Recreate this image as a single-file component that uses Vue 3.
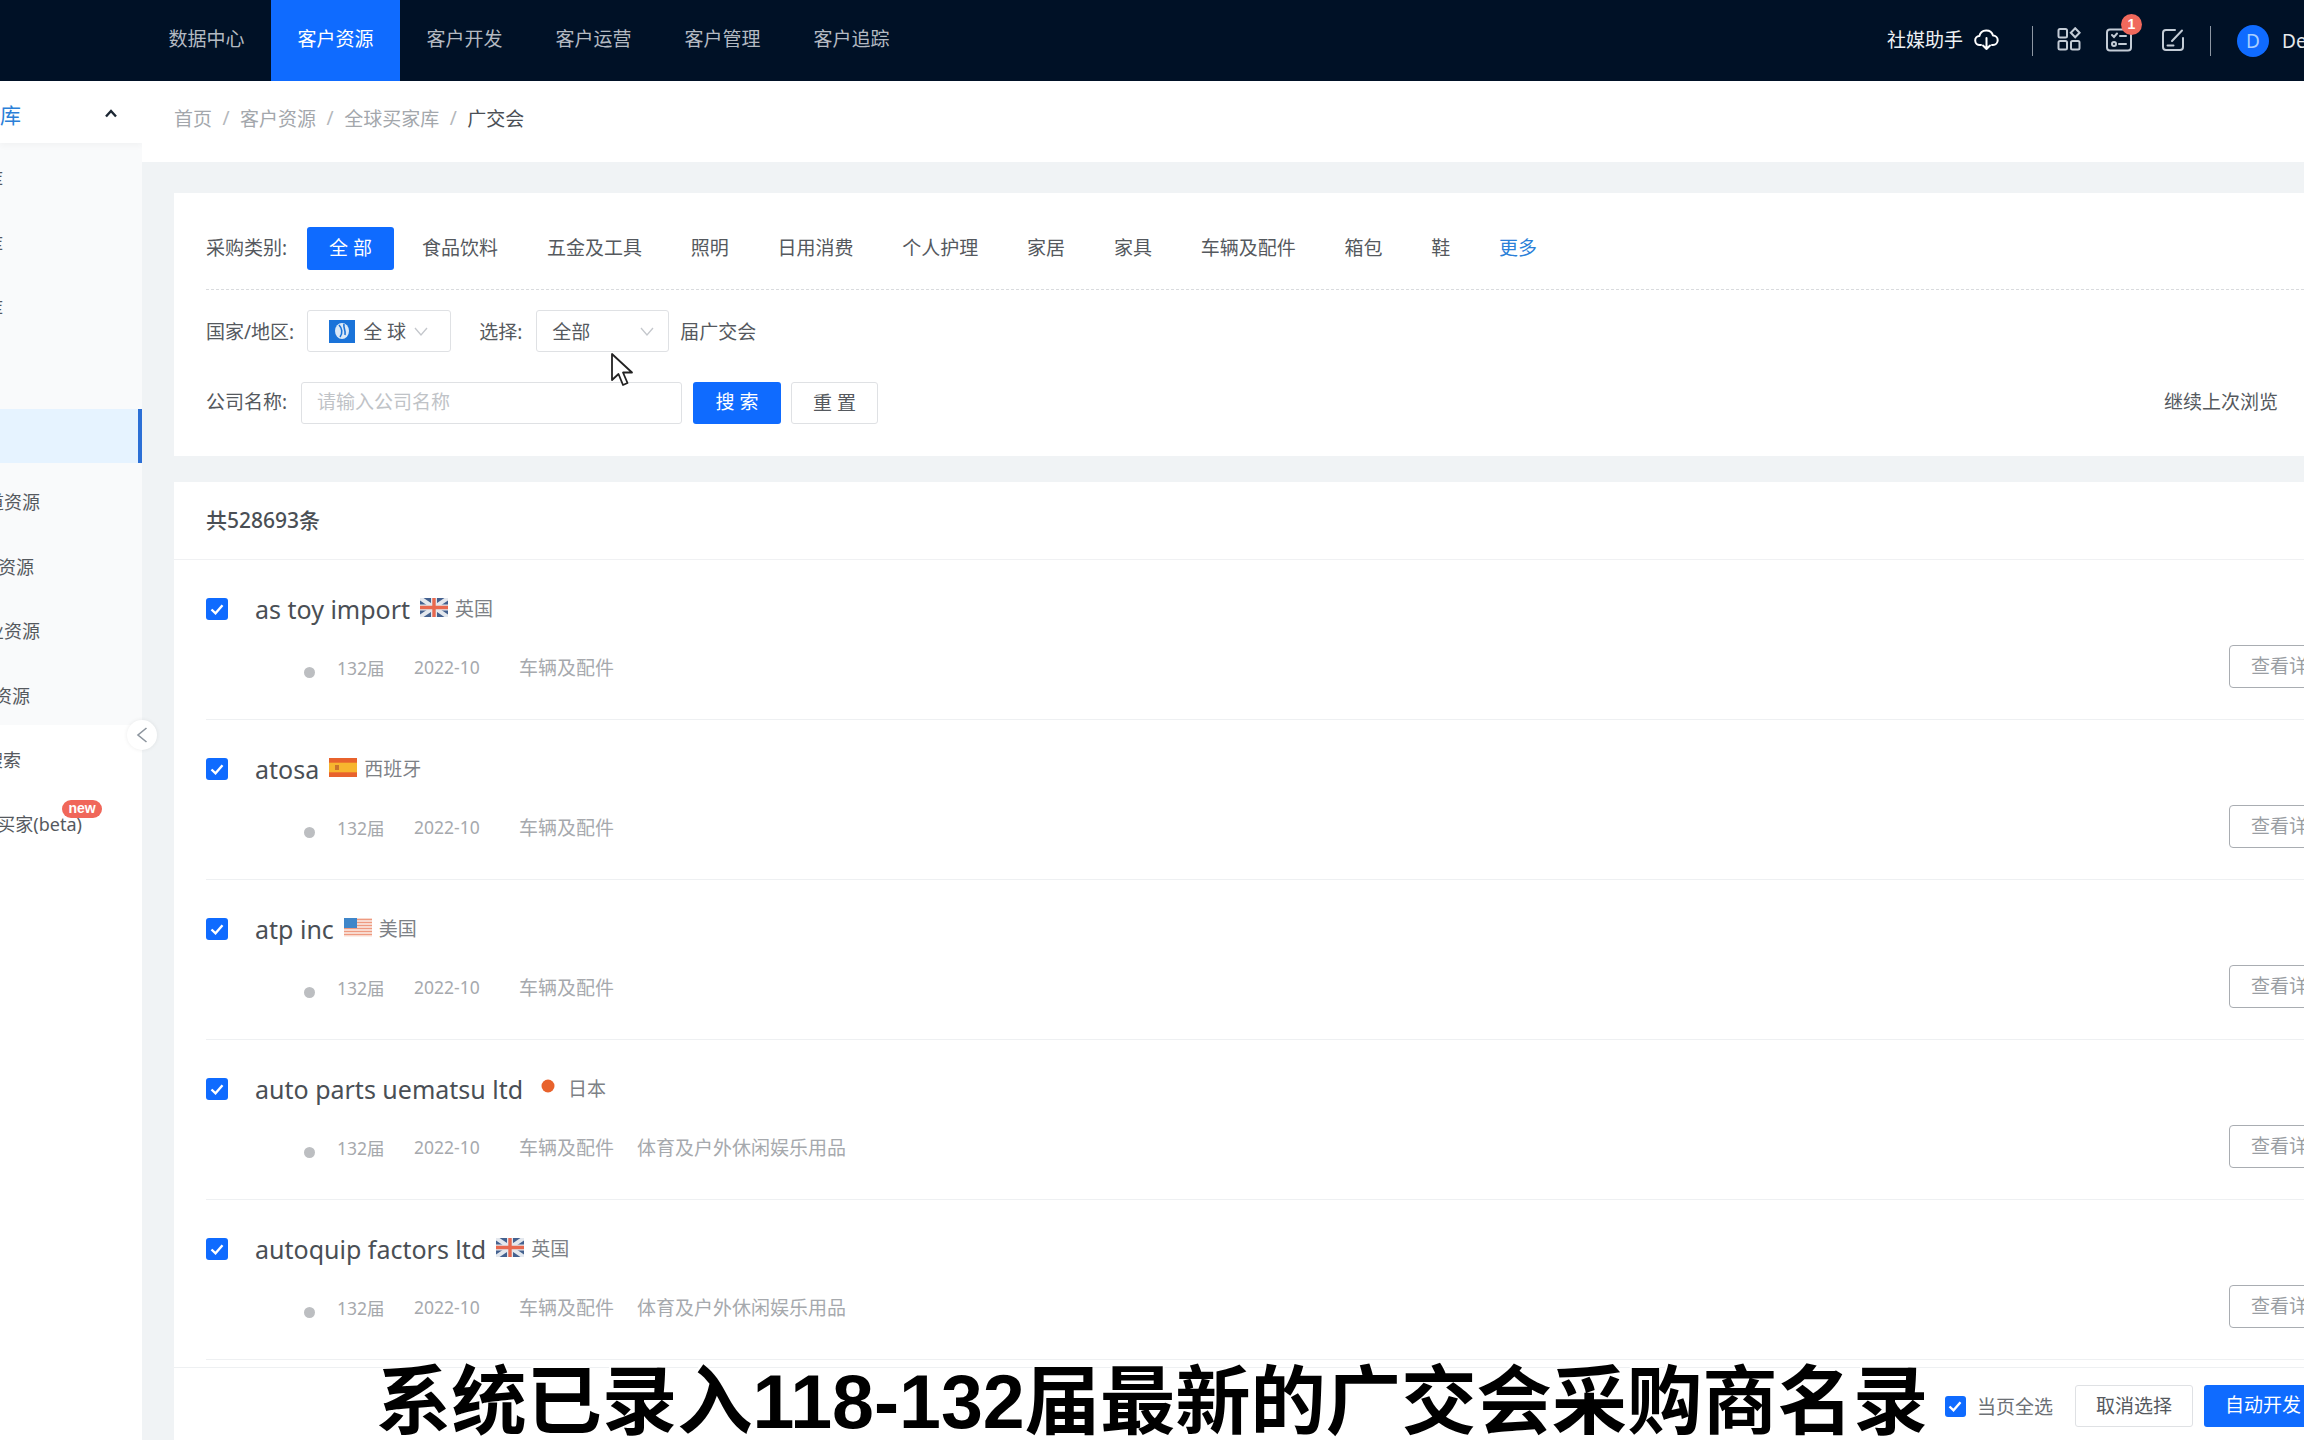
<script setup>
const navs = ['数据中心', '客户资源', '客户开发', '客户运营', '客户管理', '客户追踪']
const crumbs = ['首页', '客户资源', '全球买家库']
const cats = ['食品饮料', '五金及工具', '照明', '日用消费', '个人护理', '家居', '家具', '车辆及配件', '箱包', '鞋']

// end = where the text stops on screen, the rest runs off the left edge
const subItems = [
  { text: '展会库', end: 3 },
  { text: '海关库', end: 3 },
  { text: '名录库', end: 3 },
  { text: '', end: 3 },
  { text: '', end: 3, active: true },
  { text: '渠道资源', end: 40 },
  { text: '行业资源', end: 34 },
  { text: '企业资源', end: 40 },
  { text: '社媒资源', end: 30 }
]

const rows = [
  { name: 'as toy import', flag: 'uk', country: '英国', tags: ['车辆及配件'] },
  { name: 'atosa', flag: 'es', country: '西班牙', tags: ['车辆及配件'] },
  { name: 'atp inc', flag: 'us', country: '美国', tags: ['车辆及配件'] },
  { name: 'auto parts uematsu ltd', flag: 'jp', country: '日本', tags: ['车辆及配件', '体育及户外休闲娱乐用品'] },
  { name: 'autoquip factors ltd', flag: 'uk', country: '英国', tags: ['车辆及配件', '体育及户外休闲娱乐用品'] }
]
</script>

<template>
  <div class="page">
    <header class="topbar">
      <nav class="nav">
        <a v-for="(n, i) in navs" :key="n" class="nav-item" :class="{ on: i === 1 }">{{ n }}</a>
      </nav>
      <div class="tools">
        <span class="helper">社媒助手</span>
        <svg class="cloud" width="25" height="22" viewBox="0 0 25 22" fill="none" stroke="#fff" stroke-width="2" stroke-linecap="round" stroke-linejoin="round">
          <path d="M7 16H6a4.500 4.500 0 0 1-.6-9A7 7 0 0 1 19 6.600 4.700 4.700 0 0 1 19 16h-1" />
          <path d="M12.500 9v11M9 16.500l3.500 3.500 3.500-3.500" />
        </svg>
        <i class="sep"></i>
        <svg class="ic-grid" width="24" height="24" viewBox="0 0 24 24" fill="none" stroke="#c3ccd6" stroke-width="2">
          <rect x="1.500" y="2" width="8.500" height="8.500" rx="1.500" />
          <rect x="1.500" y="14" width="8.500" height="8.500" rx="1.500" />
          <rect x="14" y="14" width="8.500" height="8.500" rx="1.500" />
          <path d="M18.200 1.200l4.400 4.500-4.400 4.500-4.400-4.500z" />
        </svg>
        <div class="task">
          <svg width="26" height="24" viewBox="0 0 26 24" fill="none" stroke="#c3ccd6" stroke-width="2" stroke-linecap="round">
            <rect x="1" y="1.500" width="24" height="21" rx="3" />
            <path d="M6 7l2 2 3-3.500M14 8h6M13 16h7" />
            <circle cx="8" cy="16" r="2" />
          </svg>
          <b class="badge">1</b>
        </div>
        <svg class="ic-edit" width="24" height="24" viewBox="0 0 24 24" fill="none" stroke="#c3ccd6" stroke-width="2" stroke-linecap="round">
          <path d="M14 2H5a3 3 0 0 0-3 3v14a3 3 0 0 0 3 3h14a3 3 0 0 0 3-3v-9" />
          <path d="M11 13L21 2.500M6.500 17.500h6" />
        </svg>
        <i class="sep sep2"></i>
        <span class="avatar">D</span>
        <span class="user">Demo</span>
      </div>
    </header>

    <div class="body">
      <aside class="side">
        <div class="side-head">
          <span class="side-text head-text" style="width: 21px">全球买家库</span>
          <svg class="up" width="12" height="9" viewBox="0 0 12 9" fill="none" stroke="#1c2733" stroke-width="2.400"><path d="M1 7.500L6 2l5 5.500" /></svg>
        </div>
        <div class="sub">
          <div v-for="(s, i) in subItems" :key="i" class="side-item" :class="{ active: s.active }">
            <span class="side-text" :style="{ width: s.end + 'px' }">{{ s.text }}</span>
          </div>
        </div>
        <div class="side-item after"><span class="side-text" style="width: 21px">智能搜索</span></div>
        <div class="side-item">
          <span class="side-text" style="width: 82px">全球买家(beta)</span>
          <em class="new">new</em>
        </div>
      </aside>
      <button class="collapse">
        <svg width="12" height="18" viewBox="0 0 12 18" fill="none" stroke="#8d959e" stroke-width="1.600"><path d="M10.500 2L2 9l8.500 7" /></svg>
      </button>

      <main class="main">
        <div class="crumbs">
          <template v-for="c in crumbs" :key="c"><span>{{ c }}</span><i>/</i></template>
          <span class="cur">广交会</span>
        </div>

        <section class="filter card">
          <div class="cat-row">
            <span class="label">采购类别:</span>
            <span class="cat-all">全 部</span>
            <span v-for="c in cats" :key="c" class="cat">{{ c }}</span>
            <span class="cat more">更多</span>
          </div>
          <div class="line2">
            <span class="label">国家/地区:</span>
            <div class="select sel-country">
              <svg width="26" height="23" viewBox="0 0 26 23"><rect width="26" height="23" fill="#1a73d9" /><ellipse cx="13" cy="11" rx="7" ry="8" fill="#dbe9f7" /><path d="M10 5c3 3 4 8 1 12M15 4c-1 4 2 6 1 11" stroke="#1a73d9" stroke-width="1.600" fill="none" /></svg>
              <span class="sel-txt">全 球</span>
              <svg class="chev" width="14" height="9" viewBox="0 0 14 9" fill="none" stroke="#c4c7cc" stroke-width="1.300"><path d="M1 1l6 7 6-7" /></svg>
            </div>
            <span class="label pick">选择:</span>
            <div class="select sel-pick">
              <span>全部</span>
              <svg class="chev" width="14" height="9" viewBox="0 0 14 9" fill="none" stroke="#c4c7cc" stroke-width="1.300"><path d="M1 1l6 7 6-7" /></svg>
            </div>
            <span class="label suffix">届广交会</span>
          </div>
          <div class="line3">
            <span class="label">公司名称:</span>
            <div class="input">请输入公司名称</div>
            <span class="btn primary">搜 索</span>
            <span class="btn plain">重 置</span>
            <span class="resume">继续上次浏览</span>
          </div>
        </section>

        <section class="list card">
          <div class="total">共528693条</div>
          <div v-for="r in rows" :key="r.name" class="row">
            <div class="row-main">
              <div class="row-title">
                <span class="check">
                  <svg width="14" height="11" viewBox="0 0 14 11" fill="none" stroke="#fff" stroke-width="2.400"><path d="M1.500 5.500l4 3.800 7-8" /></svg>
                </span>
                <span class="name">{{ r.name }}</span>
                <svg v-if="r.flag === 'uk'" class="flag" viewBox="0 0 28 19">
                  <rect width="28" height="19" fill="#44618f" />
                  <path d="M0 0l28 19M28 0L0 19" stroke="#e4e8ee" stroke-width="4" />
                  <path d="M14 0v19M0 9.500h28" stroke="#e4e8ee" stroke-width="6" />
                  <path d="M14 0v19M0 9.500h28" stroke="#e8694f" stroke-width="3.400" />
                </svg>
                <svg v-else-if="r.flag === 'es'" class="flag" viewBox="0 0 28 19">
                  <rect width="28" height="19" fill="#e8622c" />
                  <rect y="4.700" width="28" height="9.600" fill="#f7b52e" />
                  <rect x="6" y="7" width="4" height="5" fill="#c9732c" />
                </svg>
                <svg v-else-if="r.flag === 'us'" class="flag" viewBox="0 0 28 19">
                  <rect width="28" height="19" fill="#fbeee8" />
                  <path d="M0 1.500h28M0 4.500h28M0 7.500h28M0 10.500h28M0 13.500h28M0 16.500h28" stroke="#ee9a80" stroke-width="1.500" />
                  <rect width="13" height="10" fill="#3f86c9" />
                </svg>
                <svg v-else class="flag" viewBox="0 0 28 19">
                  <circle cx="15" cy="8" r="6.500" fill="#e8622c" />
                </svg>
                <span class="country">{{ r.country }}</span>
              </div>
              <div class="row-meta">
                <i class="dot"></i>
                <span class="m1">132届</span>
                <span class="m2">2022-10</span>
                <span v-for="t in r.tags" :key="t" class="m3">{{ t }}</span>
              </div>
            </div>
            <span class="detail">查看详情</span>
          </div>
          <div class="foot">
            <span class="check small">
              <svg width="14" height="11" viewBox="0 0 14 11" fill="none" stroke="#fff" stroke-width="2.400"><path d="M1.500 5.500l4 3.800 7-8" /></svg>
            </span>
            <span class="all">当页全选</span>
            <span class="btn cancel">取消选择</span>
            <span class="btn primary auto">自动开发</span>
          </div>
        </section>
      </main>
    </div>

    <svg class="cursor" width="24" height="36" viewBox="0 0 24 36">
      <path d="M2 2v26l6.500-6 4.500 11 4.500-2-4.500-10.500H22z" fill="#fff" stroke="#222" stroke-width="1.800" stroke-linejoin="round" />
    </svg>
    <div class="subtitle">系统已录入118-132届最新的广交会采购商名录</div>
  </div>
</template>

<style>
html, body { margin: 0; background: #fff; }
</style>

<style scoped>
.page {
  position: relative;
  width: 2304px;
  height: 1440px;
  overflow: hidden;
  background: #f0f3f5;
  font-family: "Noto Sans", "Noto Sans CJK SC", sans-serif;
  font-size: 19px;
  color: #4a4f55;
}
.topbar {
  height: 81px;
  background: #001126;
  display: flex;
  align-items: stretch;
  padding-left: 142px;
}
.nav { display: flex; flex: none; }
.nav-item {
  width: 129px;
  text-align: center;
  line-height: 79px;
  color: #b4bac2;
  font-size: 19px;
}
.nav-item.on { background: #0f6bff; color: #fff; }
.tools {
  margin-left: 971px;
  display: flex;
  align-items: center;
  color: #fff;
  flex: none;
  white-space: nowrap;
}
.tools > * { flex: none; }
.helper { font-size: 19px; color: #eef1f4; margin-top: -4px; }
.cloud { margin-left: 11px; margin-top: -1px; }
.sep { width: 1px; height: 30px; background: #8d97a3; margin-left: 33px; }
.ic-grid { margin-left: 24px; margin-top: -3px; }
.task { position: relative; margin-left: 25px; height: 24px; margin-top: -2px; }
.badge {
  position: absolute;
  left: 15px;
  top: -14px;
  width: 21px;
  height: 21px;
  border-radius: 50%;
  background: #f0695c;
  color: #fff;
  font: 700 14px/21px "Liberation Sans", sans-serif;
  text-align: center;
}
.ic-edit { margin-left: 29px; margin-top: -2px; }
.sep2 { margin-left: 25px; }
.avatar {
  width: 32px;
  height: 32px;
  border-radius: 50%;
  background: #0f6bff;
  color: #a9cfff;
  text-align: center;
  line-height: 32px;
  margin-left: 26px;
  font-size: 19px;
}
.user { margin-left: 13px; color: #e6e9ec; font-size: 19px; }

.body { display: flex; height: 1359px; position: relative; }
.side {
  width: 142px;
  flex: none;
  background: #fff;
  overflow: hidden;
  font-size: 18px;
}
.side-head {
  height: 62px;
  display: flex;
  align-items: center;
  position: relative;
  box-shadow: 0 3px 6px rgba(0, 0, 0, 0.03);
  padding-top: 4px;
  box-sizing: border-box;
}
.up { position: absolute; left: 105px; top: 28px; }
.sub {
  background: #f9fafb;
  padding: 8px 0 3px;
  display: flex;
  flex-direction: column;
  gap: 10.600px;
}
.side-item {
  height: 54px;
  display: flex;
  align-items: center;
  position: relative;
}
.side-item.active {
  background: #e6f3ff;
  border-right: 4px solid #2b6fd6;
}
.side-item.after { margin-top: 7px; margin-bottom: 10.600px; }
.side-text {
  display: flex;
  justify-content: flex-end;
  white-space: nowrap;
  color: #55595e;
  flex: none;
}
.head-text { color: #2b7fd8; font-size: 21px; }
.new {
  position: absolute;
  left: 62px;
  top: 4px;
  width: 40px;
  height: 18px;
  border-radius: 9px;
  background: #f0675a;
  color: #fff;
  font: 700 14px/17px "Liberation Sans", sans-serif;
  text-align: center;
}
.collapse {
  position: absolute;
  left: 127px;
  top: 639px;
  width: 30px;
  height: 30px;
  padding: 0;
  border: 0;
  border-radius: 50%;
  background: #fff;
  box-shadow: 0 0 4px rgba(0, 0, 0, 0.08);
  display: flex;
  align-items: center;
  justify-content: center;
}

.main { flex: 1; min-width: 0; }
.crumbs {
  height: 81px;
  background: #fff;
  display: flex;
  align-items: center;
  padding-left: 32px;
  padding-bottom: 7px;
  box-sizing: border-box;
  color: #a3a7ac;
  gap: 10.500px;
}
.crumbs i { font-style: normal; color: #b4b7bb; }
.crumbs .cur { color: #4a4f55; }
.card { background: #fff; margin-left: 32px; }
.filter { margin-top: 31px; height: 263px; padding-left: 32px; box-sizing: border-box; }
.label { color: #55595e; white-space: nowrap; }
.cat-row {
  height: 97px;
  display: flex;
  align-items: center;
  border-bottom: 1px dashed #d9dbde;
  padding-top: 15px;
  box-sizing: border-box;
}
.cat-row .label, .cat { padding-bottom: 4px; }
.cat-all {
  width: 87px;
  height: 43px;
  margin-left: 20px;
  line-height: 42px;
  text-align: center;
  background: #0f6bff;
  color: #fff;
  border-radius: 3px;
}
.cat { padding-left: 24.400px; padding-right: 24.400px; color: #55595e; white-space: nowrap; }
.cat-all + .cat { padding-left: 28px; }
.cat.more { color: #2b7fd8; }
.line2 { height: 42px; margin-top: 20px; display: flex; align-items: center; }
.select {
  height: 42px;
  box-sizing: border-box;
  border: 1px solid #dfe1e4;
  border-radius: 3px;
  display: flex;
  align-items: center;
  position: relative;
  color: #55595e;
}
.sel-country { width: 144px; margin-left: 13px; padding-left: 21px; }
.sel-txt { margin-left: 8px; }
.sel-country .chev { margin-left: 8px; }
.sel-pick { width: 133px; margin-left: 14px; padding-left: 15px; }
.sel-pick .chev { position: absolute; right: 14px; top: 16px; }
.pick { margin-left: 28px; }
.suffix { margin-left: 11px; }
.line3 { height: 43px; margin-top: 29px; display: flex; align-items: center; position: relative; }
.line3 .label, .resume { padding-bottom: 3px; }
.input {
  width: 381px;
  height: 42px;
  box-sizing: border-box;
  margin-left: 14px;
  border: 1px solid #dfe1e4;
  border-radius: 3px;
  padding-left: 15px;
  line-height: 38px;
  color: #c0c3c7;
}
.btn {
  height: 42px;
  line-height: 40px;
  box-sizing: border-box;
  text-align: center;
  border-radius: 3px;
  white-space: nowrap;
}
.primary { width: 88px; margin-left: 11px; background: #0f6bff; color: #fff; }
.plain { width: 87px; margin-left: 10px; border: 1px solid #dfe1e4; color: #55595e; }
.resume { margin-left: auto; margin-right: 26px; color: #55595e; }

.list { margin-top: 26px; height: 958px; position: relative; padding: 0 0 0 32px; }
.total {
  height: 77px;
  line-height: 76px;
  font-size: 21px;
  font-weight: 500;
  margin-left: -32px;
  padding-left: 32px;
  border-bottom: 1px solid #f0f1f3;
  color: #4a4f55;
}
.row {
  height: 159px;
  box-sizing: content-box;
  border-bottom: 1px solid #eef0f2;
  display: flex;
  align-items: flex-start;
  position: relative;
}
.row-main { flex: 1; }
.row-title { display: flex; align-items: center; height: 40px; margin-top: 29px; }
.check {
  width: 22px;
  height: 22px;
  flex: none;
  border-radius: 3px;
  background: #0f6bff;
  display: flex;
  align-items: center;
  justify-content: center;
}
.name { margin-left: 27px; font-size: 25px; color: #4a4f55; white-space: nowrap; }
.flag { width: 28px; height: 19px; margin-left: 10px; flex: none; margin-top: -4px; }
.country { margin-left: 7px; color: #7d8186; margin-top: -3px; }
.row-meta { display: flex; align-items: center; height: 30px; margin-left: 98px; margin-top: 23px; color: #a6a9ad; white-space: nowrap; }
.dot { width: 11px; height: 11px; border-radius: 50%; background: #bcbec1; margin-top: 10px; }
.m1 { margin-left: 22px; width: 77px; font-size: 17.500px; }
.m2 { width: 105px; font-size: 17.500px; }
.m3 { margin-right: 23px; }
.detail {
  position: absolute;
  left: 2023px;
  top: 85px;
  width: 120px;
  height: 43px;
  box-sizing: border-box;
  border: 1px solid #a9adb2;
  border-radius: 4px;
  line-height: 40px;
  padding-left: 21px;
  color: #9a9ea3;
  white-space: nowrap;
}
.foot {
  position: absolute;
  left: 0;
  right: -60px;
  top: 885px;
  height: 73px;
  background: #fff;
  border-top: 1px solid #eef0f2;
  display: flex;
  align-items: center;
  justify-content: flex-end;
  padding-top: 4px;
  box-sizing: border-box;
}
.check.small { width: 21px; height: 21px; }
.all { margin-left: 11px; color: #6c7075; }
.cancel { width: 118px; margin-left: 22px; border: 1px solid #dfe1e4; color: #55595e; }
.auto { width: 160px; margin-left: 11px; text-align: left; padding-left: 21px; }

.cursor { position: absolute; left: 610px; top: 352px; }
.subtitle {
  position: absolute;
  left: 376px;
  top: 1356px;
  font-family: "Liberation Sans", "Noto Sans CJK SC", sans-serif;
  font-weight: 700;
  font-size: 75.300px;
  line-height: 92px;
  color: #000;
  white-space: nowrap;
  text-shadow: -2px -1px 0 #fff, 2px 1px 0 #fff;
}
</style>
